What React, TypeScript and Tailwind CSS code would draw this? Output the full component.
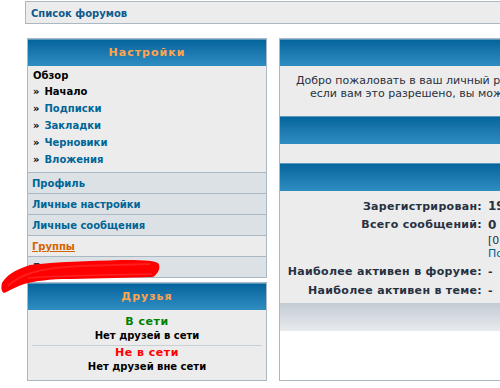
import React from 'react';

const font = { fontFamily: '"DejaVu Sans", Verdana, sans-serif' };

function Header({ children, h = 'h-[27px]' }: { children?: React.ReactNode; h?: string }) {
  return (
    <div
      className={`${h} flex items-center justify-center border-t border-[#5c98c0] bg-gradient-to-b from-[#03659c] to-[#2f8dc2] text-[11px] font-bold tracking-[1px] text-[#ffa34f]`}
    >
      {children}
    </div>
  );
}

function MenuItem({ children, active }: { children: React.ReactNode; active?: boolean }) {
  return (
    <div className="flex h-[17px] items-center text-[10px] font-bold">
      <span className="mr-[5px] text-black">»</span>
      <span className={active ? 'text-black' : 'text-[#006597]'}>{children}</span>
    </div>
  );
}

function Row({ children, light }: { children: React.ReactNode; light?: boolean }) {
  return (
    <div
      className={`flex h-[21px] items-center border-t border-[#a9b8c2] px-[4px] text-[10px] font-bold ${
        light ? 'bg-[#ececec]' : 'bg-[#dce1e5]'
      }`}
    >
      {children}
    </div>
  );
}

function Scribble() {
  return (
    <svg className="pointer-events-none absolute left-0 top-[255px]" width="170" height="45" viewBox="0 255 170 45">
      <path
        d="M2 283 C6 276 14 270 30 265 C55 262 90 261 120 260 C140 260 152 260 158 263 C161 267 159 273 153 277 C130 278 100 278 70 279 C50 279 35 281 24 284 C15 287 9 291 4 293 C1 291 1 287 2 283 Z"
        fill="#ff0000"
      />
      <path d="M8 286 C20 274 40 268 80 266 L150 264" stroke="#ff3030" strokeWidth="2" fill="none" opacity="0.6" />
      <path d="M28 278 C60 275 110 275 152 274" stroke="#ff4040" strokeWidth="1.5" fill="none" opacity="0.5" />
    </svg>
  );
}

export default function App() {
  return (
    <div className="relative h-[388px] w-[500px] overflow-hidden bg-white" style={font}>
      <div className="ml-[25px] mt-[1px] flex h-[23px] w-[600px] items-center border border-[#a9b8c2] bg-[#ececec] px-[5px] pt-[2px]">
        <span className="text-[10px] font-bold text-[#0e5a8c]">Список форумов</span>
      </div>

      <div className="ml-[27px] mt-[14px] flex gap-[12px]">
        <div className="flex w-[240px] shrink-0 flex-col gap-[4px]">
          <div className="border border-[#a9b8c2]">
            <Header>Настройки</Header>
            <div className="bg-[#ececec] px-[5px] pb-[4px] pt-[3px]">
              <div className="h-[14px] text-[10px] font-bold leading-[14px] text-black">Обзор</div>
              <MenuItem active>Начало</MenuItem>
              <MenuItem>Подписки</MenuItem>
              <MenuItem>Закладки</MenuItem>
              <MenuItem>Черновики</MenuItem>
              <MenuItem>Вложения</MenuItem>
            </div>
            <Row>
              <span className="text-[#006597]">Профиль</span>
            </Row>
            <Row>
              <span className="text-[#006597]">Личные настройки</span>
            </Row>
            <Row>
              <span className="text-[#006597]">Личные сообщения</span>
            </Row>
            <Row light>
              <span className="text-[#d46400] underline">Группы</span>
            </Row>
            <Row>
              <span className="text-[#28313f]">Друзья и недруги</span>
            </Row>
          </div>

          <div className="border border-[#a9b8c2]">
            <Header>Друзья</Header>
            <div className="flex h-[70px] flex-col bg-[#ececec] pt-[5px] text-center">
              <div className="h-[14px] text-[11px] font-bold leading-[14px] tracking-[0.5px] text-[#008000]">В сети</div>
              <div className="h-[14px] text-[10px] font-bold leading-[14px] text-black">Нет друзей в сети</div>
              <div className="mx-[4px] mt-[2px] h-px bg-[#c8d0d7]" />
              <div className="h-[14px] text-[11px] font-bold leading-[14px] tracking-[0.5px] text-[#ff0000]">Не в сети</div>
              <div className="h-[14px] text-[10px] font-bold leading-[14px] text-black">Нет друзей вне сети</div>
            </div>
          </div>
        </div>

        <div className="w-[600px] shrink-0 border border-[#a9b8c2]">
          <Header />
          <div className="h-[50px] bg-[#ececec] pt-[8px] text-[11px] leading-[13px] text-[#28313f]">
            <div className="whitespace-nowrap pl-[16px]">
              Добро пожаловать в ваш личный раздел. Здесь вы можете просматривать и изменять
            </div>
            <div className="whitespace-nowrap pl-[30px]">
              если вам это разрешено, вы можете управлять своими настройками и подписками.
            </div>
          </div>
          <Header h="h-[28px]" />
          <div className="h-[19px] bg-[#ececec]" />
          <Header h="h-[28px]" />
          <div className="h-[112px] bg-[#ececec] pt-[6px] text-[11px] text-[#28313f]">
            <div className="grid grid-cols-[202px_1fr] gap-x-[6px]">
              <div className="h-[19px] text-right font-bold leading-[19px] tracking-[0.3px]">Зарегистрирован:</div>
              <div className="h-[19px] text-[12px] font-bold leading-[19px]">19 мар 2010, 14:25</div>
              <div className="text-right font-bold leading-[18px] tracking-[0.3px]">Всего сообщений:</div>
              <div>
                <div className="text-[12px] font-bold leading-[18px]">0</div>
                <div className="leading-[13px]">[0.00% от общего числа / 0.00 сообщений в день]</div>
                <div className="leading-[13px] text-[#006597]">Показать ваши сообщения</div>
              </div>
              <div className="mt-[2px] h-[19px] text-right font-bold leading-[19px] tracking-[0.3px]">Наиболее активен в форуме:</div>
              <div className="mt-[2px] h-[19px] font-bold leading-[19px]">-</div>
              <div className="h-[19px] text-right font-bold leading-[19px] tracking-[0.3px]">Наиболее активен в теме:</div>
              <div className="h-[19px] font-bold leading-[19px]">-</div>
            </div>
          </div>
          <div className="h-[28px] bg-gradient-to-b from-[#c3cbd3] to-[#e8ebee]" />
        </div>
      </div>

      <Scribble />
    </div>
  );
}
